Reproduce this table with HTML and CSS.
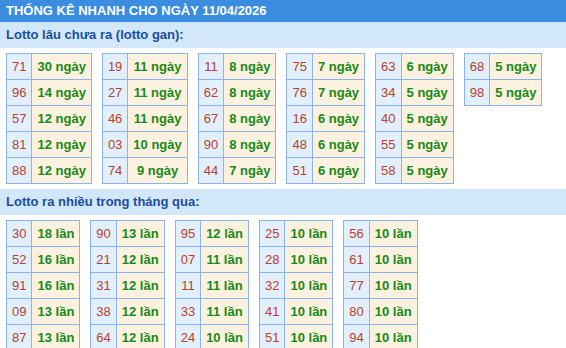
FILE: index.html
```html
<!DOCTYPE html>
<html lang="vi">
<head>
<meta charset="utf-8">
<link rel="stylesheet" href="styles.css">
</head>
<body>
<div class="head">THỐNG KÊ NHANH CHO NGÀY 11/04/2026</div>
<div class="band">Lotto lâu chưa ra (lotto gan):</div>
<div class="tables">
  <table><tr><td class="n">71</td><td class="v">30 ngày</td></tr><tr><td class="n">96</td><td class="v">14 ngày</td></tr><tr><td class="n">57</td><td class="v">12 ngày</td></tr><tr><td class="n">81</td><td class="v">12 ngày</td></tr><tr><td class="n">88</td><td class="v">12 ngày</td></tr></table>
  <table><tr><td class="n">19</td><td class="v">11 ngày</td></tr><tr><td class="n">27</td><td class="v">11 ngày</td></tr><tr><td class="n">46</td><td class="v">11 ngày</td></tr><tr><td class="n">03</td><td class="v">10 ngày</td></tr><tr><td class="n">74</td><td class="v">9 ngày</td></tr></table>
  <table><tr><td class="n">11</td><td class="v">8 ngày</td></tr><tr><td class="n">62</td><td class="v">8 ngày</td></tr><tr><td class="n">67</td><td class="v">8 ngày</td></tr><tr><td class="n">90</td><td class="v">8 ngày</td></tr><tr><td class="n">44</td><td class="v">7 ngày</td></tr></table>
  <table><tr><td class="n">75</td><td class="v">7 ngày</td></tr><tr><td class="n">76</td><td class="v">7 ngày</td></tr><tr><td class="n">16</td><td class="v">6 ngày</td></tr><tr><td class="n">48</td><td class="v">6 ngày</td></tr><tr><td class="n">51</td><td class="v">6 ngày</td></tr></table>
  <table><tr><td class="n">63</td><td class="v">6 ngày</td></tr><tr><td class="n">34</td><td class="v">5 ngày</td></tr><tr><td class="n">40</td><td class="v">5 ngày</td></tr><tr><td class="n">55</td><td class="v">5 ngày</td></tr><tr><td class="n">58</td><td class="v">5 ngày</td></tr></table>
  <table><tr><td class="n">68</td><td class="v">5 ngày</td></tr><tr><td class="n">98</td><td class="v">5 ngày</td></tr></table>
</div>
<div class="band">Lotto ra nhiều trong tháng qua:</div>
<div class="tables">
  <table><tr><td class="n">30</td><td class="v">18 lần</td></tr><tr><td class="n">52</td><td class="v">16 lần</td></tr><tr><td class="n">91</td><td class="v">16 lần</td></tr><tr><td class="n">09</td><td class="v">13 lần</td></tr><tr><td class="n">87</td><td class="v">13 lần</td></tr></table>
  <table><tr><td class="n">90</td><td class="v">13 lần</td></tr><tr><td class="n">21</td><td class="v">12 lần</td></tr><tr><td class="n">31</td><td class="v">12 lần</td></tr><tr><td class="n">38</td><td class="v">12 lần</td></tr><tr><td class="n">64</td><td class="v">12 lần</td></tr></table>
  <table><tr><td class="n">95</td><td class="v">12 lần</td></tr><tr><td class="n">07</td><td class="v">11 lần</td></tr><tr><td class="n">11</td><td class="v">11 lần</td></tr><tr><td class="n">33</td><td class="v">11 lần</td></tr><tr><td class="n">24</td><td class="v">10 lần</td></tr></table>
  <table><tr><td class="n">25</td><td class="v">10 lần</td></tr><tr><td class="n">28</td><td class="v">10 lần</td></tr><tr><td class="n">32</td><td class="v">10 lần</td></tr><tr><td class="n">41</td><td class="v">10 lần</td></tr><tr><td class="n">51</td><td class="v">10 lần</td></tr></table>
  <table><tr><td class="n">56</td><td class="v">10 lần</td></tr><tr><td class="n">61</td><td class="v">10 lần</td></tr><tr><td class="n">77</td><td class="v">10 lần</td></tr><tr><td class="n">80</td><td class="v">10 lần</td></tr><tr><td class="n">94</td><td class="v">10 lần</td></tr></table>
</div>
</body>
</html>
```
FILE: styles.css
```css
html, body {
  margin: 0;
  padding: 0;
  background: #ffffff;
  font-family: "Liberation Sans", Arial, sans-serif;
  font-size: 13px;
}
.head {
  height: 22px;
  line-height: 22px;
  background: #3a8de0;
  color: #ffffff;
  font-weight: bold;
  padding-left: 6px;
  white-space: nowrap;
}
.band {
  height: 26px;
  line-height: 26px;
  background: #d3e7fb;
  color: #1b4e9e;
  font-weight: bold;
  padding-left: 6px;
}
.tables {
  display: flex;
  align-items: flex-start;
  gap: 10px;
  padding: 5px 6px;
}
table {
  border-collapse: collapse;
}
td {
  border: 1px solid #8cb2ef;
  height: 25px;
  padding: 0 5px;
  line-height: 15px;
  text-align: center;
  white-space: nowrap;
}
td.n {
  background: #e2effd;
  color: #b8412b;
}
td.v {
  background: #fdf1e0;
  color: #178a17;
  font-weight: bold;
}
```
